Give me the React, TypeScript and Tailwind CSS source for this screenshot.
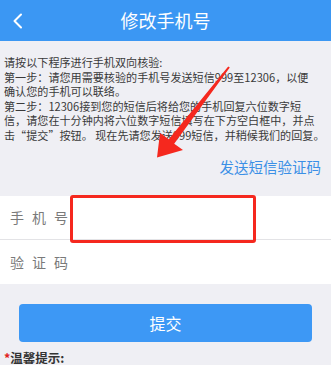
const font = { fontFamily: '"Noto Sans CJK SC", "Noto Sans", sans-serif' };

const intro = [
  "请按以下程序进行手机双向核验:",
  "第一步：请您用需要核验的手机号发送短信999至12306，以便",
  "确认您的手机可以联络。",
  "第二步：12306接到您的短信后将给您的手机回复六位数字短",
  "信，请您在十分钟内将六位数字短信填写在下方空白框中，并点",
  "击“提交”按钮。 现在先请您发送999短信，并稍候我们的回复。",
];

function Row({ label, last }: { label: string; last?: boolean }) {
  return (
    <div
      className={`flex h-[44px] items-center pl-[10px] ${last ? "" : "border-b border-[#e3e3e6]"}`}
    >
      <span className="text-[14px] tracking-[8px] text-[#7a7a7a]">{label}</span>
    </div>
  );
}

export default function App() {
  return (
    <div className="relative h-[365px] w-[331px] overflow-hidden bg-[#efeff4]" style={font}>
      <header className="relative flex h-[41px] items-center justify-center bg-[#3b97f3]">
        <svg className="absolute left-[12px] top-[13px]" width="12" height="16" viewBox="0 0 12 16">
          <polyline points="9,1.5 2.5,8 9,14.5" fill="none" stroke="white" strokeWidth="2" strokeLinecap="round" strokeLinejoin="round" />
        </svg>
        <h1 className="text-[18px] text-white">修改手机号</h1>
      </header>

      <div className="px-[4px] pt-[14px] text-[11.1px] leading-[14.5px] text-[#3a3a3a]">
        {intro.map((l) => (
          <div key={l} className="whitespace-nowrap">{l}</div>
        ))}
      </div>

      <div className="mt-[15px] flex justify-end pr-[10px]">
        <span className="text-[14.5px] leading-[20px] text-[#3b8fe6]">发送短信验证码</span>
      </div>

      <div className="mt-[19px] bg-white">
        <Row label="手机号" />
        <Row label="验证码" last />
      </div>

      <div className="px-[19px] pt-[20px]">
        <button className="flex h-[38px] w-full items-center justify-center rounded-[4px] bg-[#3d98f5] text-[16px] text-white">
          提交
        </button>
      </div>

      <div className="mt-[8px] flex items-center pl-[4px] text-[12.5px] font-bold leading-[16px] text-[#333]">
        <span className="text-[#e02020]">*</span>
        <span>温馨提示:</span>
      </div>

      {/* annotation overlays */}
      <div className="absolute left-[70px] top-[195px] h-[48px] w-[186px] rounded-[3px] border-[3px] border-[#f5281e]" />
      <svg className="absolute left-0 top-0" width="331" height="365" viewBox="0 0 331 365">
        <polygon
          points="229.8,67.6 174.2,143.7 183,150 157,157.5 160,133 168.8,139.3 228.2,66.4"
          fill="#f5281e"
        />
      </svg>
    </div>
  );
}
